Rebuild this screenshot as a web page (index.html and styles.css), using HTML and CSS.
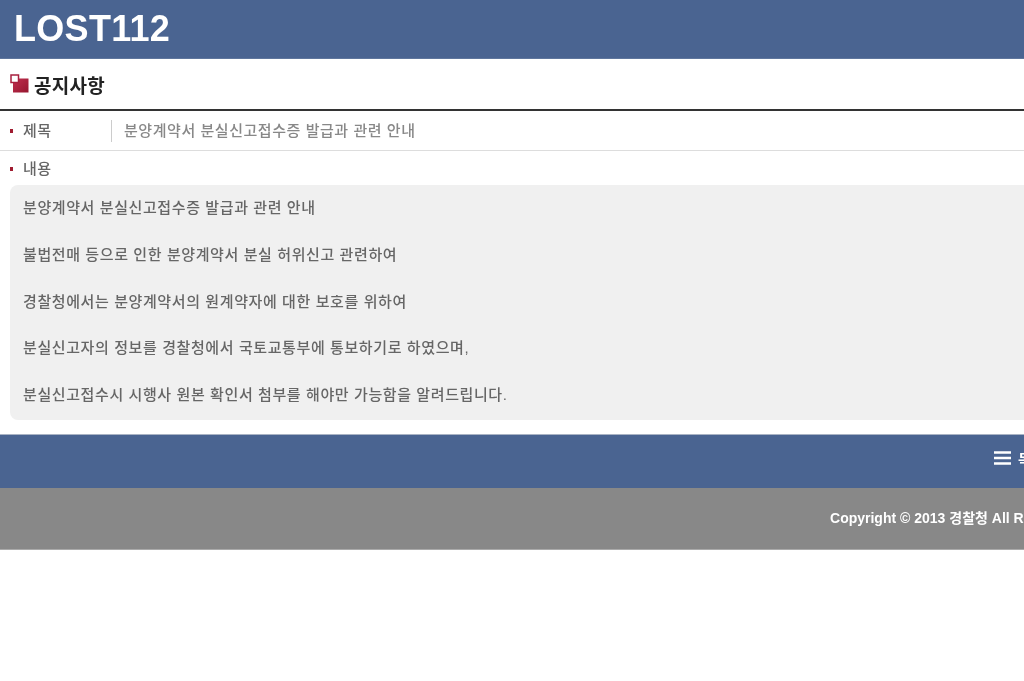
FILE: index.html
```html
<!DOCTYPE html>
<html lang="ko">
<head>
    <meta charset="UTF-8">
    <meta name="viewport" content="width=device-width, initial-scale=1.0">
    <title>LOST112</title>
    <link rel="stylesheet" href="styles.css">
</head>
<body>
    <div class="page">
        <header class="top">LOST112</header>

        <h1 class="title">
            <svg class="title-icon" width="19" height="19" viewBox="0 0 19 19">
                <defs>
                    <linearGradient id="titleRed" x1="0" y1="0" x2="1" y2="1">
                        <stop offset="0" stop-color="#c0304f"/>
                        <stop offset="1" stop-color="#96162f"/>
                    </linearGradient>
                </defs>
                <path d="M9 4.500H18.500V18.500H3V9H9Z" fill="url(#titleRed)"/>
                <rect x="1" y="1" width="7.500" height="7.500" fill="#fff" stroke="#a8203f" stroke-width="1.500"/>
            </svg>
            공지사항
        </h1>

        <div class="row row-subject">
            <span class="label">제목</span>
            <span class="subject">분양계약서 분실신고접수증 발급과 관련 안내</span>
        </div>

        <div class="row row-body">
            <span class="label">내용</span>
        </div>
        <div class="content">
            <p>분양계약서 분실신고접수증 발급과 관련 안내</p>
            <p>불법전매 등으로 인한 분양계약서 분실 허위신고 관련하여</p>
            <p>경찰청에서는 분양계약서의 원계약자에 대한 보호를 위하여</p>
            <p>분실신고자의 정보를 경찰청에서 국토교통부에 통보하기로 하였으며,</p>
            <p>분실신고접수시 시행사 원본 확인서 첨부를 해야만 가능함을 알려드립니다.</p>
        </div>

        <nav class="actions">
            <a class="list-btn">
                <svg width="17" height="14" viewBox="0 0 17 14">
                    <path d="M0 1.500H17M0 7H17M0 12.500H17" stroke="#fff" stroke-width="2.500"/>
                </svg>
                목록
            </a>
        </nav>

        <footer class="copyright">Copyright © 2013 경찰청 All Rights Reserved.</footer>
    </div>
</body>
</html>
```

FILE: styles.css
```css
html, body {
    margin: 0;
    padding: 0;
    overflow: hidden;
    background-color: #fff;
}
body {
    width: 1024px;
    height: 681px;
    font-family: "Liberation Sans", "Noto Sans CJK KR", sans-serif;
}
.page {
    width: 1958px;
    filter: blur(0.4px);
}
.top {
    height: 58px;
    padding-left: 14px;
    background-color: #4a6491;
    border-bottom: 1px solid #5f769d;
    color: #fff;
    font-size: 36px;
    font-weight: bold;
    letter-spacing: 0.3px;
    line-height: 58px;
}
.title {
    display: flex;
    align-items: center;
    gap: 5px;
    height: 50px;
    margin: 0;
    padding-left: 10px;
    box-sizing: border-box;
    color: #222;
    font-size: 19px;
    font-weight: bold;
    letter-spacing: 0.3px;
}
.title-icon {
    margin-top: -2px;
}
.row {
    display: flex;
    align-items: center;
    padding-left: 10px;
    font-size: 15px;
    font-weight: 500;
    letter-spacing: 0.55px;
}
.row-subject {
    height: 39px;
    border-top: 2px solid #333;
    border-bottom: 1px solid #ddd;
}
.row-body {
    height: 34px;
}
.label {
    display: flex;
    align-items: center;
    gap: 10px;
    width: 101px;
    margin-top: -2px;
    color: #666;
}
.label::before {
    content: "";
    width: 3px;
    height: 4px;
    margin-top: 3px;
    background-color: #a01c30;
}
.subject {
    padding-left: 12px;
    border-left: 1px solid #ccc;
    color: #888;
    line-height: 22px;
}
.content {
    display: flex;
    flex-direction: column;
    gap: 23.4px;
    width: 1938px;
    height: 235px;
    margin-left: 10px;
    padding: 11px 13px;
    box-sizing: border-box;
    background-color: #f0f0f0;
    border-radius: 8px;
    color: #666;
    font-size: 15px;
    font-weight: 500;
    letter-spacing: 0.6px;
    line-height: 23.4px;
}
.content p {
    margin: 0;
}
.actions {
    display: flex;
    align-items: center;
    height: 54px;
    margin-top: 14px;
    padding-left: 994px;
    padding-bottom: 7px;
    box-sizing: border-box;
    background-color: #4a6491;
    border-top: 1px solid #a9b3c4;
}
.list-btn {
    display: flex;
    align-items: center;
    gap: 7px;
    color: #fff;
    font-size: 15px;
    font-weight: bold;
}
.copyright {
    height: 62px;
    box-sizing: border-box;
    background-color: #888;
    border-bottom: 1px solid #aaa;
    color: #fff;
    font-size: 14px;
    font-weight: bold;
    line-height: 60px;
    text-align: center;
}
```
